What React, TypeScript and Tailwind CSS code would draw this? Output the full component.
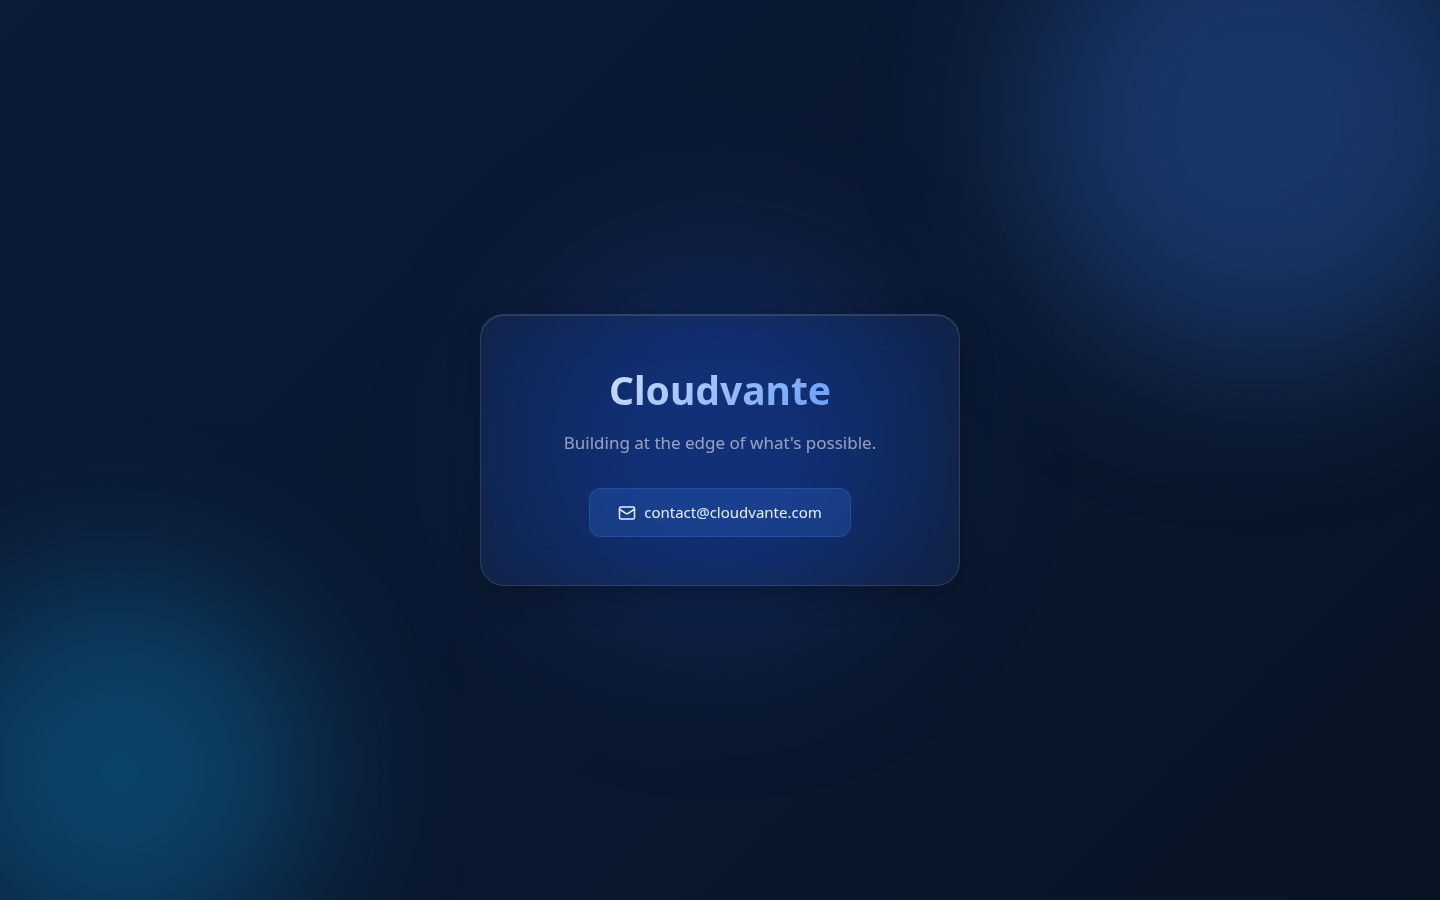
import { Mail } from 'lucide-react'

const CONTACT_EMAIL = 'contact@cloudvante.com'

export default function App() {
  return (
    <main className="relative isolate flex min-h-screen items-center justify-center overflow-hidden bg-[linear-gradient(135deg,#0b1b38_0%,#0a1830_50%,#081324_100%)] px-6 font-['Noto_Sans',sans-serif] text-white">
      {/* Glowing orbs */}
      <div aria-hidden="true" className="absolute -top-30 -right-18 -z-10 size-122 rounded-full bg-[#3b82f6]/29 blur-[80px]" />
      <div aria-hidden="true" className="absolute -bottom-16 -left-18 -z-10 size-96 rounded-full bg-[#0ea5e9]/30 blur-[80px]" />
      <div aria-hidden="true" className="absolute top-1/2 left-1/2 -z-10 size-96 -translate-1/2 rounded-full bg-[#2b5fee]/22 blur-[80px]" />

      <section className="w-full max-w-[480px] rounded-3xl border border-[#c7d2ff]/14 bg-[#c7d2ff]/6 px-12 py-12 text-center shadow-[0_8px_32px_rgba(0,0,0,0.3),inset_0_1px_0_rgba(255,255,255,0.12)] backdrop-blur-[20px] backdrop-saturate-150">
        <h1 className="mb-3 bg-[linear-gradient(135deg,#ebf2ff_0%,#4a8af7_100%)] bg-clip-text text-[39px] leading-[54px] font-bold text-transparent">
          Cloudvante
        </h1>
        <p className="mb-8 text-[17px] leading-[27px] text-white/55">Building at the edge of what's possible.</p>
        <a
          href={`mailto:${CONTACT_EMAIL}`}
          className="inline-flex items-center gap-2 rounded-xl border border-[#3b82f6]/25 bg-[#3b82f6]/20 px-7 py-3 align-top text-[15px] leading-[23px] text-[#e6efff] transition-colors hover:bg-[#3b82f6]/30"
        >
          <Mail size={18} />
          {CONTACT_EMAIL}
        </a>
      </section>
    </main>
  )
}
